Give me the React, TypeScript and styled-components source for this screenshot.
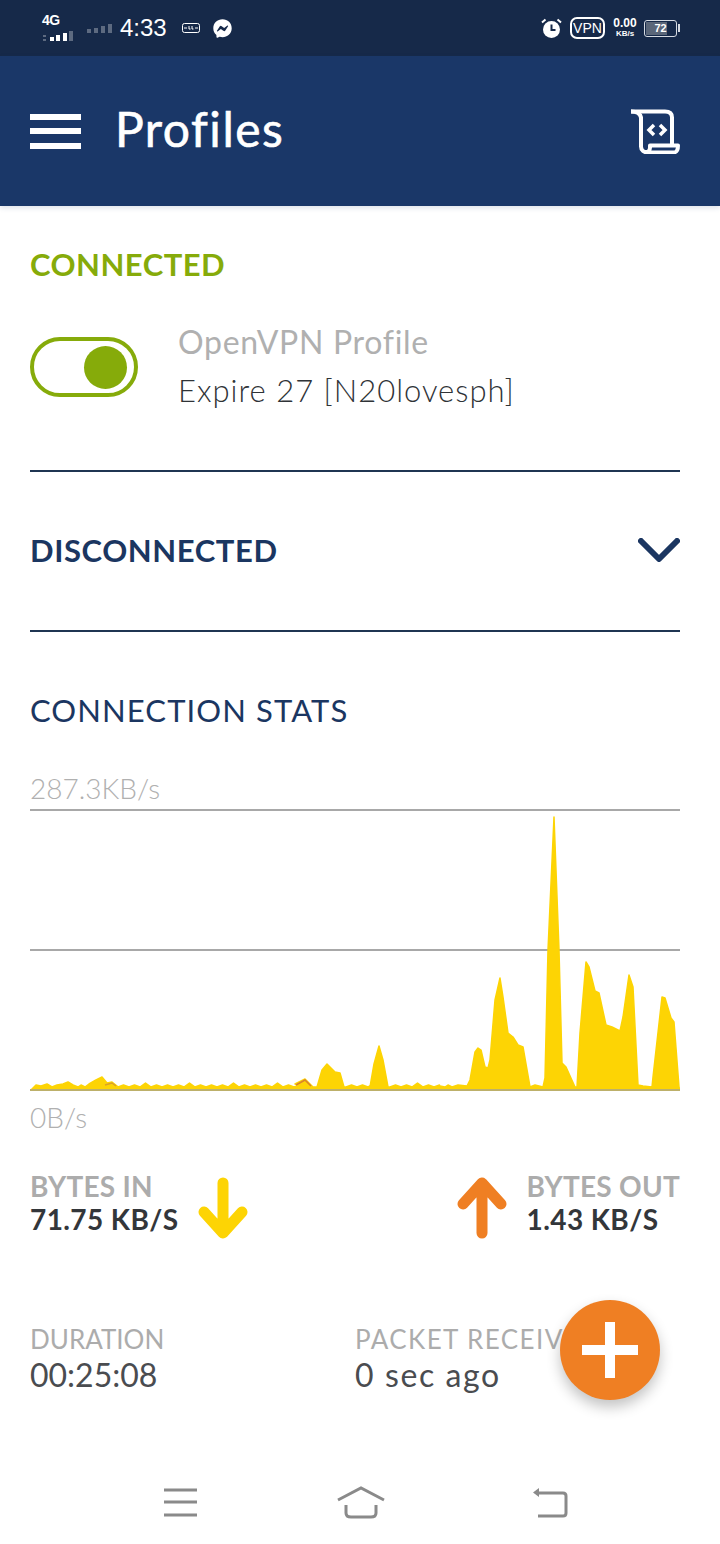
import React from 'react';
import styled, { createGlobalStyle } from 'styled-components';
import { FaFacebookMessenger } from 'react-icons/fa';

const GlobalStyle = createGlobalStyle`
    html, body {
        margin: 0;
        padding: 0;
        background: #fff;
    }
`;

const Screen = styled.div`
    position: relative;
    width: 720px;
    height: 1544px;
    overflow: hidden;
    display: flex;
    flex-direction: column;
    background: #fff;
    font-family: Lato, 'Open Sans', sans-serif;
`;

const StatusBar = styled.div`
    height: 56px;
    flex: none;
    display: flex;
    align-items: center;
    justify-content: space-between;
    padding: 0 40px 0 41px;
    background: #162949;
    color: #fff;
    font-family: 'Liberation Sans', sans-serif;
`;

const StatusGroup = styled.div`
    display: flex;
    align-items: center;
`;

const NetworkStack = styled.div`
    position: relative;
    width: 34px;
    height: 34px;
`;

const NetworkLabel = styled.span`
    position: absolute;
    left: 1px;
    top: 1px;
    font-size: 14px;
    font-weight: 700;
    letter-spacing: -0.5px;
    line-height: 16px;
`;

const SignalIcon = styled.svg`
    display: block;
    width: 34px;
    height: 14px;
    margin-left: 4px;
`;

const NetworkSignal = styled(SignalIcon)`
    position: absolute;
    left: -4px;
    top: 20px;
`;

const Clock = styled.span`
    margin: 0 15px 0 7px;
    font-size: 24px;
    line-height: 28px;
`;

const MessengerIcon = styled(FaFacebookMessenger)`
    margin-left: 13px;
    color: #fff;
`;

const VpnBadge = styled.span`
    width: 35px;
    height: 22px;
    box-sizing: border-box;
    margin: 0 7px 0 8px;
    border: 2px solid #fff;
    border-radius: 7px;
    font-size: 14px;
    font-weight: 400;
    line-height: 18px;
    text-align: center;
`;

const SpeedStack = styled.div`
    width: 26px;
    margin-right: 6px;
    font-weight: 700;
    text-align: center;
`;

const SpeedValue = styled.div`
    font-size: 12px;
    line-height: 11px;
`;

const SpeedUnit = styled.div`
    font-size: 8px;
    line-height: 9px;
`;

const Battery = styled.div`
    position: relative;
    width: 33px;
    height: 17px;
    box-sizing: border-box;
    border: 1.5px solid #d5dae2;
    border-radius: 3px;
    overflow: hidden;
    font-size: 11px;
    font-weight: 700;
    line-height: 14px;
    text-align: center;
`;

const BatteryFill = styled.div`
    position: absolute;
    inset: 1px 9px 1px 1px;
    background: #5a6679;
`;

const BatteryLevel = styled.span`
    position: relative;
`;

const BatteryCap = styled.div`
    width: 2px;
    height: 8px;
    margin-left: 1px;
    background: #d5dae2;
`;

const AppBar = styled.header`
    height: 150px;
    flex: none;
    display: flex;
    align-items: center;
    padding: 0 40px 0 30px;
    background: #1a3768;
    color: #fff;
    box-shadow: 0 2px 5px rgba(26, 55, 104, 0.14);
`;

const MenuButton = styled.div`
    width: 51px;
    height: 35px;
    flex: none;
    display: flex;
    flex-direction: column;
    justify-content: space-between;
`;

const MenuLine = styled.span`
    height: 6px;
    background: #fff;
`;

const Title = styled.h1`
    flex: 1;
    margin: 0 0 4px 34px;
    font-size: 48px;
    font-weight: 400;
    letter-spacing: 1.5px;
    line-height: 56px;
    -webkit-text-stroke: 0.6px #fff;
`;

const Content = styled.main`
    flex: 1;
    display: flex;
    flex-direction: column;
    padding: 0 40px 0 30px;
`;

const Section = styled.section<{ $height: number; $top: number; $divider?: boolean }>`
    flex: none;
    display: flex;
    flex-direction: column;
    height: ${p => p.$height}px;
    box-sizing: border-box;
    padding-top: ${p => p.$top}px;
    border-bottom: ${p => (p.$divider ? '2px solid #1f3552' : 'none')};
`;

const SectionHead = styled.div`
    display: flex;
    align-items: center;
    justify-content: space-between;
`;

const SectionTitle = styled.h2<{ $color: string; $weight: number; $spacing: number }>`
    margin: 0;
    color: ${p => p.$color};
    font-size: 31px;
    font-weight: ${p => p.$weight};
    letter-spacing: ${p => p.$spacing}px;
    line-height: 40px;
`;

const ProfileRow = styled.div`
    display: flex;
    align-items: center;
    margin-top: 34px;
`;

const Toggle = styled.div`
    width: 108px;
    height: 60px;
    flex: none;
    box-sizing: border-box;
    display: flex;
    align-items: center;
    justify-content: flex-end;
    margin-top: 2px;
    padding-right: 7px;
    border: 4px solid #86ab0a;
    border-radius: 30px;
`;

const ToggleKnob = styled.span`
    width: 43px;
    height: 43px;
    border-radius: 50%;
    background: #86ab0a;
`;

const ProfileText = styled.div`
    margin-left: 40px;
`;

const ProfileType = styled.div`
    color: #b0b0b0;
    font-size: 32px;
    font-weight: 400;
    letter-spacing: 0.7px;
    line-height: 48px;
`;

const ProfileName = styled.div`
    color: #2f3337;
    font-size: 31px;
    font-weight: 300;
    letter-spacing: 1px;
    line-height: 48px;
`;

const ChartLabel = styled.div<{ $top: number }>`
    margin-top: ${p => p.$top}px;
    color: #b0b0b0;
    font-size: 28px;
    font-weight: 300;
    line-height: 36px;
`;

const Chart = styled.svg`
    display: block;
    flex: none;
    width: 650px;
    height: 284px;
    margin-top: 2px;
`;

const RateRow = styled.div`
    display: flex;
    justify-content: space-between;
    margin-top: 32px;
`;

const RateGroup = styled.div`
    display: flex;
    align-items: center;
    gap: 20px;
`;

const ArrowIcon = styled.svg`
    display: block;
    flex: none;
    width: 50px;
    height: 62px;
    margin-top: 10px;
    fill: none;
    stroke: ${p => p.color};
    stroke-width: 11;
    stroke-linecap: round;
    stroke-linejoin: round;
`;

const RateLabel = styled.div`
    color: #acacac;
    font-size: 28px;
    font-weight: 700;
    letter-spacing: 0.25px;
    line-height: 32px;
    white-space: nowrap;
`;

const RateValue = styled.div`
    color: #33363a;
    font-size: 28px;
    font-weight: 700;
    letter-spacing: 0.4px;
    line-height: 34px;
    white-space: nowrap;
`;

const StatGrid = styled.div`
    display: grid;
    grid-template-columns: 325px 1fr;
    margin-top: 84px;
`;

const StatLabel = styled.div<{ $spacing: number }>`
    color: #acacac;
    font-size: 26px;
    font-weight: 400;
    letter-spacing: ${p => p.$spacing}px;
    line-height: 32px;
    white-space: nowrap;
`;

const StatValue = styled.div<{ $spacing: number }>`
    margin-top: 2px;
    color: #4a4c50;
    font-size: 32px;
    font-weight: 400;
    letter-spacing: ${p => p.$spacing}px;
    line-height: 36px;
    white-space: nowrap;
`;

const Fab = styled.div`
    position: absolute;
    left: 560px;
    top: 1300px;
    width: 100px;
    height: 100px;
    display: flex;
    align-items: center;
    justify-content: center;
    border-radius: 50%;
    background: #ef7f23;
    box-shadow: 0 7px 14px rgba(0, 0, 0, 0.24);
`;

const NavBar = styled.nav`
    height: 84px;
    flex: none;
    display: flex;
    align-items: center;
    justify-content: center;
    gap: 133px;
    padding-right: 1px;
`;

const NavIcon = styled.svg`
    display: block;
    width: 50px;
    height: 40px;
    fill: none;
    stroke: #8a8a8a;
    stroke-width: 3;
`;

const ripple = (from: number, to: number, step = 11): string => {
    const points: string[] = [];
    for (let x = from, i = 0; x < to; x += step, i++) {
        points.push(`${x},${1087}`);
        points.push(`${x + step / 2},${i % 4 === 2 ? 1083 : 1085}`);
    }
    return points.join(' ');
};

const yellowArea = [
    '31,1090 36,1085 41,1086 47,1084 52,1087 57,1085 63,1084 68,1082 73,1085 78,1087 81,1085 85,1087 89,1084',
    '96,1080 102,1077 107,1083 112,1082 117,1086',
    ripple(118, 295),
    '295,1084 305,1079 313,1087 317,1087 322,1070 327,1064 335,1072 340,1073 344,1087',
    ripple(346, 370),
    '370,1087 374,1064 379,1046 383,1060 388,1087',
    ripple(390, 440),
    '440,1086 445,1087 448,1085 452,1087 458,1085 467,1086 470,1080 475,1052 478,1048 481,1050 485,1067 488,1068 490,1060',
    '495,1000 500,978 503,997 508,1033 513,1037 518,1045 523,1047 530,1087 535,1085 543,1087 545,1078 548,950 554,817',
    '559,950 562,1063 566,1067 575,1087 577,1087 580,1033 586,962 589,967 595,991 599,993 606,1025 612,1027 620,1031',
    '623,1017 629,975 633,987 638,1085 643,1086 652,1087 653,1077 662,997 665,998 671,1018 674,1022 679,1087 680,1090',
].join(' ');

const gridLines = [810, 950];

const App: React.FC = () => {
    return (
        <Screen>
            <GlobalStyle />
            <StatusBar>
                <StatusGroup>
                    <NetworkStack>
                        <NetworkLabel>4G</NetworkLabel>
                        <NetworkSignal viewBox="0 0 34 14">
                            <rect x="2" y="4" width="3" height="2" fill="#5d6a80" />
                            <rect x="2" y="8" width="3" height="2" fill="#5d6a80" />
                            <rect x="9" y="6" width="4" height="4" fill="#fff" />
                            <rect x="15" y="4" width="4" height="6" fill="#fff" />
                            <rect x="22" y="2" width="4" height="8" fill="#fff" />
                            <rect x="28" y="0" width="4" height="10" fill="#5d6a80" />
                        </NetworkSignal>
                    </NetworkStack>
                    <SignalIcon viewBox="0 0 34 14">
                        <rect x="15" y="7" width="4" height="5" fill="#5d6a80" />
                        <rect x="22" y="5" width="4" height="7" fill="#5d6a80" />
                        <rect x="29" y="3" width="4" height="9" fill="#5d6a80" />
                        <rect x="8" y="8" width="4" height="4" fill="#5d6a80" />
                    </SignalIcon>
                    <Clock>4:33</Clock>
                    <svg width="18" height="10" viewBox="0 0 18 10" fill="none" stroke="#fff" strokeWidth="1">
                        <rect x="0.5" y="0.5" width="17" height="9" rx="2" />
                        <path d="M2 5h3M13 5h3M7 3v3h1.500M10 3v3h1.500" />
                    </svg>
                    <MessengerIcon size={19} />
                </StatusGroup>
                <StatusGroup>
                    <svg width="21" height="21" viewBox="0 0 21 21">
                        <circle cx="10.500" cy="11.500" r="8.500" fill="#fff" />
                        <path d="M1 4.500 4.500 1.500M20 4.500 16.500 1.500" stroke="#fff" strokeWidth="2" />
                        <path d="M10.500 6.500v5.500h4" fill="none" stroke="#162949" strokeWidth="2" />
                    </svg>
                    <VpnBadge>VPN</VpnBadge>
                    <SpeedStack>
                        <SpeedValue>0.00</SpeedValue>
                        <SpeedUnit>KB/s</SpeedUnit>
                    </SpeedStack>
                    <Battery>
                        <BatteryFill />
                        <BatteryLevel>72</BatteryLevel>
                    </Battery>
                    <BatteryCap />
                </StatusGroup>
            </StatusBar>

            <AppBar>
                <MenuButton>
                    <MenuLine />
                    <MenuLine />
                    <MenuLine />
                </MenuButton>
                <Title>Profiles</Title>
                <svg width="50" height="46" viewBox="0 0 50 46" fill="none" stroke="#fff" strokeWidth="4">
                    <path d="M1 3.500h34c5 0 7 2 7 6v27" />
                    <path d="M1 3.500c5 0 9 1 10 6v29c0 4 3 6 7 6h25c3 0 5-1 5-7H20v2c0 3-2 5-5 5" strokeLinejoin="round" />
                    <path d="M24 17l-5 5 5 5M30 17l5 5-5 5" strokeWidth="3.500" />
                </svg>
            </AppBar>

            <Content>
                <Section $height={266} $top={38} $divider>
                    <SectionTitle $color="#86ab0a" $weight={700} $spacing={0.5}>CONNECTED</SectionTitle>
                    <ProfileRow>
                        <Toggle>
                            <ToggleKnob />
                        </Toggle>
                        <ProfileText>
                            <ProfileType>OpenVPN Profile</ProfileType>
                            <ProfileName>Expire 27 [N20lovesph]</ProfileName>
                        </ProfileText>
                    </ProfileRow>
                </Section>

                <Section $height={160} $top={58} $divider>
                    <SectionHead>
                        <SectionTitle $color="#1b3661" $weight={700} $spacing={0.6}>DISCONNECTED</SectionTitle>
                        <svg width="42" height="24" viewBox="0 0 42 24" fill="none" stroke="#1b3661" strokeWidth="6">
                            <path d="M3 3l18 18L39 3" strokeLinecap="round" strokeLinejoin="round" />
                        </svg>
                    </SectionHead>
                </Section>

                <Section $height={760} $top={58}>
                    <SectionTitle $color="#1b3661" $weight={400} $spacing={1.1}>CONNECTION STATS</SectionTitle>
                    <ChartLabel $top={40}>287.3KB/s</ChartLabel>
                    <Chart viewBox="30 808 650 284">
                        {gridLines.map(y => (
                            <line key={y} x1="30" x2="680" y1={y} y2={y} stroke="#a8a8a8" strokeWidth="2" />
                        ))}
                        <polygon points={yellowArea} fill="#fdd404" stroke="#fdd404" strokeWidth="1.500" strokeLinejoin="round" />
                        <polyline points="296,1085 305,1080 311,1086" fill="none" stroke="#d9822b" strokeWidth="1.500" />
                        <polyline points="105,1085 112,1083 116,1086" fill="none" stroke="#d9a02b" strokeWidth="1.500" />
                        <line x1="30" x2="680" y1="1090" y2="1090" stroke="#bdb06a" strokeWidth="2" />
                    </Chart>
                    <ChartLabel $top={7}>0B/s</ChartLabel>
                    <RateRow>
                        <RateGroup>
                            <div>
                                <RateLabel>BYTES IN</RateLabel>
                                <RateValue>71.75 KB/S</RateValue>
                            </div>
                            <ArrowIcon viewBox="0 0 50 62" color="#fdd404">
                                <path d="M25 6v44M6 35l19 21 19-21" />
                            </ArrowIcon>
                        </RateGroup>
                        <RateGroup>
                            <ArrowIcon viewBox="0 0 50 62" color="#ef7f23">
                                <path d="M25 56V12M6 27 25 6l19 21" />
                            </ArrowIcon>
                            <div>
                                <RateLabel>BYTES OUT</RateLabel>
                                <RateValue>1.43 KB/S</RateValue>
                            </div>
                        </RateGroup>
                    </RateRow>
                    <StatGrid>
                        <div>
                            <StatLabel $spacing={0}>DURATION</StatLabel>
                            <StatValue $spacing={0}>00:25:08</StatValue>
                        </div>
                        <div>
                            <StatLabel $spacing={1.4}>PACKET RECEIVED</StatLabel>
                            <StatValue $spacing={1.6}>0 sec ago</StatValue>
                        </div>
                    </StatGrid>
                </Section>
            </Content>

            <Fab>
                <svg width="56" height="56" viewBox="0 0 56 56" fill="#fff">
                    <rect x="23" y="0" width="10" height="56" />
                    <rect x="0" y="23" width="56" height="10" />
                </svg>
            </Fab>

            <NavBar>
                <NavIcon viewBox="0 0 50 40">
                    <path d="M12 8h33M12 20h33M12 33h33" />
                </NavIcon>
                <NavIcon viewBox="0 0 50 40">
                    <path d="M3 18 26 6l23 12M11 23v8c0 3 2 4 5 4h20c3 0 5-1 5-4v-8" />
                </NavIcon>
                <NavIcon viewBox="0 0 50 40">
                    <path d="M19 11h26c2 0 3 1 3 3v17c0 2-1 3-3 3H20" />
                    <path d="M21 6v9l-6-4.500z" fill="#8a8a8a" stroke="none" />
                </NavIcon>
            </NavBar>
        </Screen>
    );
};

export default App;
